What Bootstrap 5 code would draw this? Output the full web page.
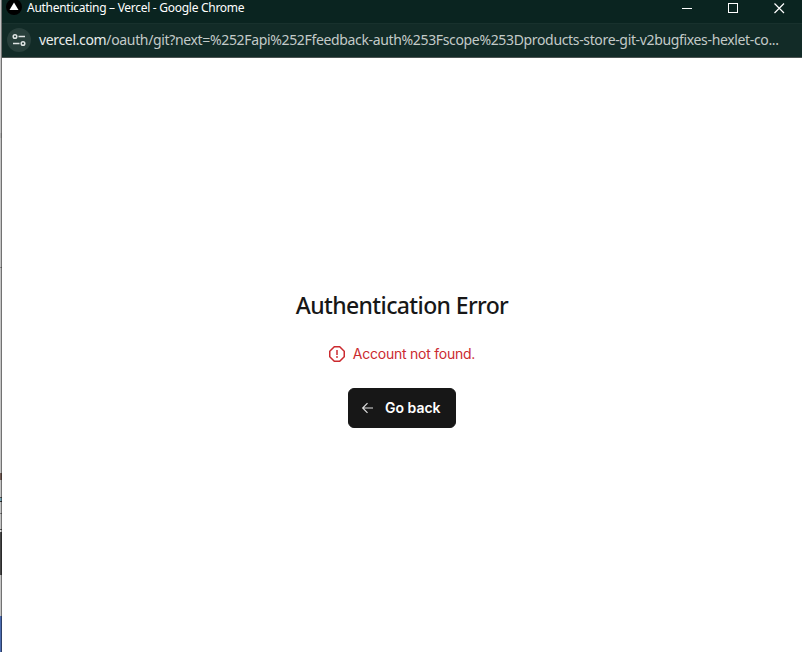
<!DOCTYPE html>
<html lang="en">
<head>
<meta charset="utf-8">
<title>Authenticating – Vercel</title>
<link href="https://cdn.jsdelivr.net/npm/bootstrap@5.3.0/dist/css/bootstrap.min.css" rel="stylesheet">
<style>
body{width:802px;height:652px;font-family:"Noto Sans","Open Sans",sans-serif;background:#fff}
.edge{width:2px;border-right:1px solid rgba(0,0,0,.42);background:linear-gradient(#c4c4c4 0 133px,#b4b4b4 133px 138px,#c4c4c4 138px 267px,#888 267px 268px,#c4c4c4 268px 473px,#735c55 473px 480px,#c4c4c4 480px 497px,#555 497px 498px,#7ba6b5 498px 501px,#333 501px 502px,#c4c4c4 502px 513px,#777 513px 514px,#c4c4c4 514px 529px,#555 529px 530px,#ddd 530px 532px,#484848 532px 575px,#c4c4c4 575px 616px,#4c6cb0 616px)}
.titlebar{height:23px;background:#0a2420;padding-left:4px}
.titlebar svg,.address svg{display:block;flex:none}
.win-title{font-size:12px;line-height:16px;letter-spacing:-.28px;margin:0 0 7px 3px;color:#fff}
.address{height:35px;background:#122b27;border-top:1px solid #18312d;border-bottom:1px solid #4b5351;padding-left:5px}
.site-info{width:24px;height:24px;background:#283f3b;flex:none;margin-bottom:1px}
.url{font-size:14px;line-height:20px;color:#c3cac8;margin:0 0 1px 8px;letter-spacing:-.345px}
.url b{font-weight:400;color:#e9edec}
.heading{font-size:23px;line-height:32px;font-weight:500;color:#171717;letter-spacing:-.62px;margin:231px 0 0}
.notice{font-family:Inter,sans-serif;font-size:14px;line-height:20px;color:#cb2a2f;margin-top:23px;gap:8px;letter-spacing:-.24px}
.back-btn{--bs-btn-bg:#171717;--bs-btn-color:#fff;--bs-btn-border-color:#171717;width:108px;height:40px;border-radius:6px;font:600 14px/20px Inter,sans-serif;padding:0 0 0 11px;margin-top:24px}
.back-label{margin-left:9px}
</style>
</head>
<body class="d-flex overflow-hidden">
<div class="edge flex-shrink-0"></div>
<div class="d-flex flex-column flex-grow-1">
  <header class="titlebar d-flex justify-content-between">
    <div class="d-flex align-items-start">
      <svg width="18" height="16"><circle cx="8" cy="7" r="8" fill="#000"/><path d="M8 2.500 12.500 10h-9z" fill="#fff"/></svg>
      <span class="win-title text-nowrap">Authenticating – Vercel - Google Chrome</span>
    </div>
    <svg width="124" height="16" fill="none" stroke="#fff" shape-rendering="crispEdges"><path d="M4 8.500h10M50.500 3.500h9v9h-9z"/><path d="m96.500 3.500 9.500 9.500m0-9.500-9.500 9.500" shape-rendering="auto" stroke-width="1.2"/></svg>
  </header>
  <div class="address d-flex align-items-center">
    <div class="site-info rounded-circle">
      <svg width="24" height="24" fill="none" stroke="#dfe4e3" stroke-width="1.5"><circle cx="8" cy="8.500" r="1.800"/><path d="M11.500 8.500H18M6 15.500h6.500"/><circle cx="16" cy="15.500" r="1.800"/></svg>
    </div>
    <span class="url text-nowrap"><b>vercel.com</b>/oauth/git?next=%252Fapi%252Ffeedback-auth%253Fscope%253Dproducts-store-git-v2bugfixes-hexlet-co...</span>
  </div>
  <main class="d-flex flex-column align-items-center flex-grow-1">
    <h1 class="heading text-nowrap">Authentication Error</h1>
    <div class="notice d-flex align-items-center">
      <svg width="16" height="16" fill="none" stroke="#cb2a2f" stroke-width="1.5"><path d="M5.300.75h5.400l4.550 4.550v5.400l-4.550 4.550H5.300L.75 10.700V5.300z"/><path d="M8 4v5"/><circle cx="8" cy="11" r=".9" fill="#cb2a2f" stroke="none"/></svg>
      <span>Account not found.</span>
    </div>
    <button class="btn back-btn d-flex align-items-center" type="button">
      <svg width="16" height="16" fill="none" stroke="#ddd" stroke-width="1.2"><path d="M13 8H3M7.500 3.200 2.700 8l4.800 4.800"/></svg>
      <span class="back-label">Go back</span>
    </button>
  </main>
</div>
<script src="https://cdn.jsdelivr.net/npm/bootstrap@5.3.0/dist/js/bootstrap.bundle.min.js"></script>
</body>
</html>
